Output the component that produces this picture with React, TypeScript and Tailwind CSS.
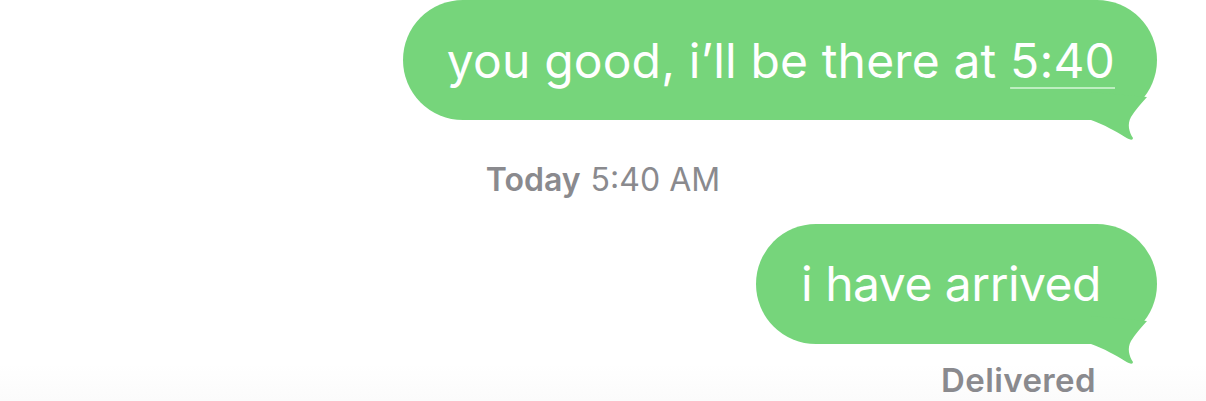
import React from "react";

const GREEN = "#76d57b";

function Tail() {
  return (
    <svg
      className="absolute right-0 bottom-[-22px]"
      width="70"
      height="50"
      viewBox="0 0 70 50"
    >
      <path
        d="M4 28 C16 32 30 40 38 45 Q46 50 46 46 C42 40 40 32 44 25 C48 18 54 12 60 5 L4 0 Z"
        fill={GREEN}
      />
    </svg>
  );
}

export default function App() {
  return (
    <div
      className="w-[1206px] h-[401px] overflow-hidden bg-white flex flex-col relative"
      style={{ fontFamily: "Inter, 'Noto Sans', sans-serif" }}
    >
      <div className="flex justify-end pr-[49px]">
        <div className="relative">
          <div className="h-[120px] rounded-[60px] bg-[#76d57b] pl-[44px] pr-[42px] flex items-center text-white text-[48px] tracking-[0.15px]">
            <span className="mt-[2px]">
              you good, i’ll be there at{" "}
              <span className="underline decoration-[#bdeec0] decoration-2 underline-offset-[9px]">
                5:40
              </span>
            </span>
          </div>
          <Tail />
        </div>
      </div>

      <div className="mt-[40px] h-[40px] flex items-center justify-center text-[32px] text-[#8a8a8e] leading-none">
        <span className="font-semibold">Today</span>
        <span className="ml-[10px]">5:40 AM</span>
      </div>

      <div className="mt-[24px] flex justify-end pr-[49px]">
        <div className="relative">
          <div className="h-[120px] rounded-[60px] bg-[#76d57b] pl-[45px] pr-[56px] flex items-center text-white text-[48px] tracking-[-0.5px]">
            i have arrived
          </div>
          <Tail />
        </div>
      </div>

      <div className="mt-[20px] flex-1 flex justify-end pr-[110px] text-[33px] tracking-[0.4px] text-[#8a8a8e] font-semibold leading-none bg-gradient-to-b from-white to-[#fbfbfb]">
        Delivered
      </div>
    </div>
  );
}
